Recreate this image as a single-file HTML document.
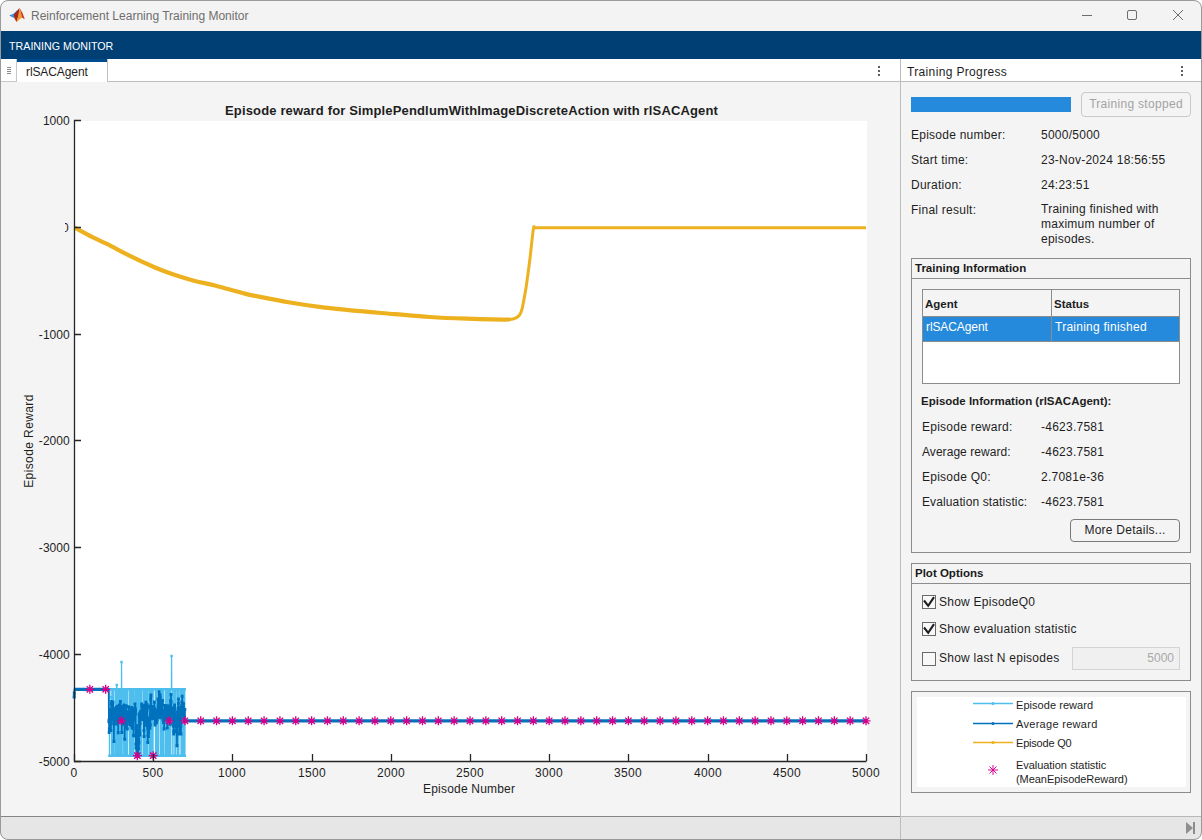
<!DOCTYPE html>
<html><head><meta charset="utf-8">
<style>
*{box-sizing:border-box}
html,body{margin:0;padding:0;width:1202px;height:840px;overflow:hidden;background:#ffffff;font-family:"Liberation Sans",sans-serif;font-size:12px;color:#1a1a1a}
.a{position:absolute}
#win{position:absolute;left:0;top:0;width:1202px;height:840px;border-radius:8px;background:#f3f3f3;overflow:hidden}
#frame{position:absolute;left:0;top:0;width:1202px;height:840px;border:1px solid #9a9a9a;border-radius:8px;pointer-events:none}
#title{position:absolute;left:31px;top:9px;font-size:12px;color:#6e6e6e;white-space:nowrap}
#bluebar{position:absolute;left:0;top:31px;width:1202px;height:28px;background:#003f73}
#bluebar span{position:absolute;left:9px;top:9px;color:#fff;font-size:10.7px}
#tabs{position:absolute;left:0;top:59px;width:900px;height:23px;background:#fff;border-bottom:1px solid #bdbdbd}
#rtabs{position:absolute;left:901px;top:59px;width:301px;height:23px;background:#fff;border-bottom:1px solid #bdbdbd}
.pane{position:absolute;background:#f4f4f4}
.vdiv{position:absolute;left:900px;top:59px;width:1px;height:780px;background:#bdbdbd}
.grp{position:absolute;border:1px solid #8c8c8c}
.grp .hd{position:absolute;left:0;top:0;right:0;height:20px;border-bottom:1px solid #8c8c8c;font-weight:bold;padding-left:3px;line-height:18px;font-size:11.5px;letter-spacing:0}
.lbl{position:absolute;white-space:nowrap;font-size:12px;color:#1e1e1e;letter-spacing:0.25px}
.yt{position:absolute;left:0;width:69.8px;text-align:right;font-size:12px;color:#1e1e1e;letter-spacing:0.05px}
.xt{position:absolute;top:766px;width:60px;text-align:center;font-size:12px;color:#1e1e1e;letter-spacing:0.3px}
.cb{position:absolute;width:14px;height:14px;border:1px solid #6a6a6a;background:#f8f8f8}
</style></head><body>
<div id="win">
  <!-- title bar -->
  <svg class="a" style="left:8px;top:6px" width="18" height="18" viewBox="0 0 18 18">
    <path d="M1.1,9.6 L5.5,7.8 L9.5,4 L11.2,2.2 L8.5,8.5 L6.8,12.3 L4,11 Z" fill="#3a8fd9"/>
    <path d="M5.8,8.6 L9.8,4.2 L11.6,1.9 L10.6,9.5 L8.5,16.1 L6.6,12.6 Z" fill="#a8261a"/>
    <path d="M11.6,1.9 L12.8,6 L13.8,11.6 L8.5,16.1 L10.2,10 Z" fill="#ef9a2a"/>
    <path d="M11.6,1.9 L14.3,6.5 L16.8,13.3 L13.8,11.6 L12.8,6 Z" fill="#c8381e"/>
    <path d="M8.5,16.1 L11.5,13.8 L9.6,15.5Z" fill="#f5c02e"/>
  </svg>
  <div id="title">Reinforcement Learning Training Monitor</div>
  <svg class="a" style="left:1070px;top:0" width="130" height="30">
    <path d="M12,15.5H22" stroke="#6c6c6c" stroke-width="1"/>
    <rect x="57.5" y="10.5" width="9" height="9" rx="1.5" fill="none" stroke="#6c6c6c" stroke-width="1"/>
    <path d="M103,10L113,20M113,10L103,20" stroke="#6c6c6c" stroke-width="1"/>
  </svg>
  <div id="bluebar"><span>TRAINING MONITOR</span></div>

  <!-- tab strip -->
  <div id="tabs"></div>
  <div class="a" style="left:0;top:59px;width:17px;height:23px;background:#fff;border-right:1px solid #c8c8c8;border-bottom:1px solid #c8c8c8"></div>
  <svg class="a" style="left:0;top:59px" width="16" height="22"><path d="M7,8.5H11M7,10.5H11M7,12.5H11M7,14.5H11" stroke="#8a8a8a" stroke-width="1"/></svg>
  <div class="a" style="left:17px;top:59px;width:90px;height:23px;background:#fff;border-top:3px solid #004b8d"></div>
  <div class="a" style="left:107px;top:59px;width:1px;height:23px;background:#c0c0c0"></div>
  <div class="lbl" style="left:26px;top:65px;letter-spacing:-0.1px">rlSACAgent</div>
  <svg class="a" style="left:877px;top:65px" width="5" height="12"><rect x="1" y="1" width="2" height="2" fill="#5e5e5e"/><rect x="1" y="5" width="2" height="2" fill="#5e5e5e"/><rect x="1" y="9" width="2" height="2" fill="#5e5e5e"/></svg>

  <div id="rtabs"></div>
  <div class="lbl" style="left:907px;top:65px;letter-spacing:0.35px">Training Progress</div>
  <svg class="a" style="left:1180px;top:65px" width="5" height="12"><rect x="1" y="1" width="2" height="2" fill="#5e5e5e"/><rect x="1" y="5" width="2" height="2" fill="#5e5e5e"/><rect x="1" y="9" width="2" height="2" fill="#5e5e5e"/></svg>

  <!-- left pane -->
  <div class="pane" style="left:0;top:82px;width:900px;height:734px"></div>
  <div class="a" style="left:0;top:816px;width:900px;height:1px;background:#858585"></div>
  <div class="a" style="left:901px;top:816px;width:301px;height:1px;background:#b8b8b8"></div>
  <div class="a" style="left:0;top:817px;width:1202px;height:23px;background:#e6e6e6"></div>
  <svg class="a" style="left:0;top:0" width="1202" height="840">
<rect x="75" y="121" width="792" height="640" fill="#fff"/>
<polyline points="74.16,696.9 74.32,694.8 74.48,689.3 74.63,689.3 74.79,689.3 74.95,689.3 75.11,689.3 75.27,689.3 75.43,689.3 75.58,689.3 75.74,689.3 75.90,689.3 76.06,689.3 76.22,689.3 76.38,689.3 76.53,689.3 76.69,689.3 76.85,689.3 77.01,689.3 77.17,689.3 77.33,689.3 77.48,689.3 77.64,689.3 77.80,689.3 77.96,689.3 78.12,689.3 78.28,689.3 78.44,689.3 78.59,689.3 78.75,689.3 78.91,689.3 79.07,689.3 79.23,689.3 79.39,689.3 79.54,689.3 79.70,689.3 79.86,689.3 80.02,689.3 80.18,689.3 80.34,689.3 80.49,689.3 80.65,689.3 80.81,689.3 80.97,689.3 81.13,689.3 81.29,689.3 81.44,689.3 81.60,689.3 81.76,689.3 81.92,689.3 82.08,689.3 82.24,689.3 82.40,689.3 82.55,689.3 82.71,689.3 82.87,689.3 83.03,689.3 83.19,689.3 83.35,689.3 83.50,689.3 83.66,689.3 83.82,689.3 83.98,689.3 84.14,689.3 84.30,689.3 84.45,689.3 84.61,689.3 84.77,689.3 84.93,689.3 85.09,689.3 85.25,689.3 85.40,689.3 85.56,689.3 85.72,689.3 85.88,689.3 86.04,689.3 86.20,689.3 86.36,689.3 86.51,689.3 86.67,689.3 86.83,689.3 86.99,689.3 87.15,689.3 87.31,689.3 87.46,689.3 87.62,689.3 87.78,689.3 87.94,689.3 88.10,689.3 88.26,689.3 88.41,689.3 88.57,689.3 88.73,689.3 88.89,689.3 89.05,689.3 89.21,689.3 89.36,689.3 89.52,689.3 89.68,689.3 89.84,689.3 90.00,689.3 90.16,689.3 90.32,689.3 90.47,689.3 90.63,689.3 90.79,689.3 90.95,689.3 91.11,689.3 91.27,689.3 91.42,689.3 91.58,689.3 91.74,689.3 91.90,689.3 92.06,689.3 92.22,689.3 92.37,689.3 92.53,689.3 92.69,689.3 92.85,689.3 93.01,689.3 93.17,689.3 93.32,689.3 93.48,689.3 93.64,689.3 93.80,689.3 93.96,689.3 94.12,689.3 94.28,689.3 94.43,689.3 94.59,689.3 94.75,689.3 94.91,689.3 95.07,689.3 95.23,689.3 95.38,689.3 95.54,689.3 95.70,689.3 95.86,689.3 96.02,689.3 96.18,689.3 96.33,689.3 96.49,689.3 96.65,689.3 96.81,689.3 96.97,689.3 97.13,689.3 97.28,689.3 97.44,689.3 97.60,689.3 97.76,689.3 97.92,689.3 98.08,689.3 98.24,689.3 98.39,689.3 98.55,689.3 98.71,689.3 98.87,689.3 99.03,689.3 99.19,689.3 99.34,689.3 99.50,689.3 99.66,689.3 99.82,689.3 99.98,689.3 100.14,689.3 100.29,689.3 100.45,689.3 100.61,689.3 100.77,689.3 100.93,689.3 101.09,689.3 101.24,689.3 101.40,689.3 101.56,689.3 101.72,689.3 101.88,689.3 102.04,689.3 102.20,689.3 102.35,689.3 102.51,689.3 102.67,689.3 102.83,689.3 102.99,689.3 103.15,689.3 103.30,689.3 103.46,689.3 103.62,689.3 103.78,689.3 103.94,689.3 104.10,689.3 104.25,689.3 104.41,689.3 104.57,689.3 104.73,689.3 104.89,689.3 105.05,689.3 105.20,689.3 105.36,689.3 105.52,689.3 105.68,689.3 105.84,689.3 106.00,689.3 106.16,689.3 106.31,689.3 106.47,689.3 106.63,689.3 106.79,689.3 106.95,689.3 107.11,689.3 107.26,689.3 107.42,689.3 107.58,689.3 107.74,689.3 107.90,689.3 108.06,689.3 108.21,689.3 108.37,689.3 108.53,689.3 108.69,689.3 108.85,689.3 109.01,689.3 109.16,689.3 109.32,689.3 109.48,755.7 109.64,755.7 109.80,689.3 109.96,697.3 110.12,697.3 110.27,697.3 110.43,697.3 110.59,697.3 110.75,697.3 110.91,697.3 111.07,697.3 111.22,697.3 111.38,697.3 111.54,697.3 111.70,755.7 111.86,689.3 112.02,689.3 112.17,689.3 112.33,689.3 112.49,718.3 112.65,689.3 112.81,689.3 112.97,755.7 113.12,755.7 113.28,689.3 113.44,728.5 113.60,689.3 113.76,755.7 113.92,755.7 114.08,755.7 114.23,755.7 114.39,755.7 114.55,755.7 114.71,755.7 114.87,755.7 115.03,755.7 115.18,755.7 115.34,689.3 115.50,689.3 115.66,689.3 115.82,755.7 115.98,755.7 116.13,755.7 116.29,755.7 116.45,755.7 116.61,689.3 116.77,685.0 116.93,689.3 117.08,689.3 117.24,689.3 117.40,689.3 117.56,755.7 117.72,755.7 117.88,691.8 118.04,755.7 118.19,689.3 118.35,755.7 118.51,689.3 118.67,689.3 118.83,689.3 118.99,689.3 119.14,689.3 119.30,755.7 119.46,755.7 119.62,695.3 119.78,713.5 119.94,755.7 120.09,689.3 120.25,755.7 120.41,755.7 120.57,755.7 120.73,689.3 120.89,689.3 121.04,689.3 121.20,755.7 121.36,755.7 121.52,662.0 121.68,689.3 121.84,689.3 122.00,755.7 122.15,755.7 122.31,689.3 122.47,689.3 122.63,689.3 122.79,689.3 122.95,689.3 123.10,689.3 123.26,689.3 123.42,689.3 123.58,689.3 123.74,755.7 123.90,689.3 124.05,689.3 124.21,755.7 124.37,689.3 124.53,689.3 124.69,689.3 124.85,755.7 125.00,755.7 125.16,689.3 125.32,755.7 125.48,755.7 125.64,755.7 125.80,755.7 125.96,689.3 126.11,689.3 126.27,755.7 126.43,689.3 126.59,689.3 126.75,689.3 126.91,740.6 127.06,689.3 127.22,755.7 127.38,755.7 127.54,755.7 127.70,689.3 127.86,689.3 128.01,689.3 128.17,689.3 128.33,689.3 128.49,689.3 128.65,689.3 128.81,689.3 128.96,689.3 129.12,689.3 129.28,689.3 129.44,689.3 129.60,755.7 129.76,689.3 129.92,755.7 130.07,755.7 130.23,689.3 130.39,755.7 130.55,689.3 130.71,755.7 130.87,755.7 131.02,689.3 131.18,689.3 131.34,755.7 131.50,755.7 131.66,689.3 131.82,689.3 131.97,689.3 132.13,689.3 132.29,755.7 132.45,755.7 132.61,689.3 132.77,691.3 132.92,689.3 133.08,689.3 133.24,689.3 133.40,755.7 133.56,689.3 133.72,755.7 133.88,689.3 134.03,689.3 134.19,736.8 134.35,736.8 134.51,736.8 134.67,736.8 134.83,736.8 134.98,736.8 135.14,736.8 135.30,736.8 135.46,689.3 135.62,689.3 135.78,755.7 135.93,689.3 136.09,689.3 136.25,689.3 136.41,689.3 136.57,755.7 136.73,689.3 136.88,689.3 137.04,689.3 137.20,689.3 137.36,755.7 137.52,689.3 137.68,689.3 137.84,755.7 137.99,755.7 138.15,755.7 138.31,689.3 138.47,755.7 138.63,689.3 138.79,689.3 138.94,689.3 139.10,689.3 139.26,689.3 139.42,742.4 139.58,689.3 139.74,689.3 139.89,689.3 140.05,755.7 140.21,689.3 140.37,689.3 140.53,689.3 140.69,755.7 140.84,689.3 141.00,689.3 141.16,755.7 141.32,755.7 141.48,689.3 141.64,689.3 141.80,689.3 141.95,689.3 142.11,689.3 142.27,689.3 142.43,689.3 142.59,689.3 142.75,689.3 142.90,689.3 143.06,689.3 143.22,755.7 143.38,755.7 143.54,755.7 143.70,689.3 143.85,689.3 144.01,689.3 144.17,755.7 144.33,755.7 144.49,689.3 144.65,689.3 144.80,755.7 144.96,689.3 145.12,749.1 145.28,755.7 145.44,689.3 145.60,689.3 145.76,689.3 145.91,689.3 146.07,755.7 146.23,755.7 146.39,689.3 146.55,689.3 146.71,755.7 146.86,755.7 147.02,689.3 147.18,689.3 147.34,755.7 147.50,689.3 147.66,689.3 147.81,689.3 147.97,689.3 148.13,689.3 148.29,689.3 148.45,689.3 148.61,689.3 148.76,689.3 148.92,689.3 149.08,755.7 149.24,689.3 149.40,689.3 149.56,689.3 149.72,755.7 149.87,689.3 150.03,689.3 150.19,689.3 150.35,755.7 150.51,689.3 150.67,689.3 150.82,755.7 150.98,689.3 151.14,689.3 151.30,755.7 151.46,689.3 151.62,689.3 151.77,755.7 151.93,689.3 152.09,689.3 152.25,755.7 152.41,689.3 152.57,689.3 152.72,755.7 152.88,689.3 153.04,755.7 153.20,689.3 153.36,689.3 153.52,689.3 153.68,689.3 153.83,689.3 153.99,689.3 154.15,689.3 154.31,689.3 154.47,689.3 154.63,689.3 154.78,689.3 154.94,689.3 155.10,689.3 155.26,689.3 155.42,712.3 155.58,755.7 155.73,689.3 155.89,689.3 156.05,689.3 156.21,755.7 156.37,689.3 156.53,730.6 156.68,689.3 156.84,755.7 157.00,755.7 157.16,755.7 157.32,755.7 157.48,755.7 157.64,755.7 157.79,755.7 157.95,755.7 158.11,755.7 158.27,689.3 158.43,755.7 158.59,689.3 158.74,755.7 158.90,689.3 159.06,689.3 159.22,689.3 159.38,689.3 159.54,689.3 159.69,689.3 159.85,689.3 160.01,689.3 160.17,689.3 160.33,689.3 160.49,689.3 160.64,755.7 160.80,689.3 160.96,755.7 161.12,689.3 161.28,755.7 161.44,689.3 161.60,689.3 161.75,755.7 161.91,689.3 162.07,689.3 162.23,755.7 162.39,755.7 162.55,689.3 162.70,755.7 162.86,689.3 163.02,755.7 163.18,689.3 163.34,689.3 163.50,689.3 163.65,689.3 163.81,689.3 163.97,755.7 164.13,755.7 164.29,755.7 164.45,755.7 164.60,755.7 164.76,755.7 164.92,755.7 165.08,755.7 165.24,755.7 165.40,755.7 165.56,755.7 165.71,689.3 165.87,755.7 166.03,689.3 166.19,755.7 166.35,689.3 166.51,689.3 166.66,689.3 166.82,689.3 166.98,755.7 167.14,689.3 167.30,689.3 167.46,689.3 167.61,755.7 167.77,755.7 167.93,689.3 168.09,755.7 168.25,689.3 168.41,689.3 168.56,689.3 168.72,689.3 168.88,689.3 169.04,755.7 169.20,689.3 169.36,689.3 169.52,755.7 169.67,755.7 169.83,755.7 169.99,689.3 170.15,689.3 170.31,755.7 170.47,689.3 170.62,689.3 170.78,755.7 170.94,689.3 171.10,689.3 171.26,689.3 171.42,689.3 171.57,656.0 171.73,689.3 171.89,689.3 172.05,689.3 172.21,689.3 172.37,689.3 172.52,689.3 172.68,689.3 172.84,755.7 173.00,755.7 173.16,689.3 173.32,720.6 173.48,720.6 173.63,720.6 173.79,720.6 173.95,720.6 174.11,720.6 174.27,720.6 174.43,720.6 174.58,689.3 174.74,689.3 174.90,755.7 175.06,689.3 175.22,689.3 175.38,689.3 175.53,755.7 175.69,755.7 175.85,689.3 176.01,689.3 176.17,689.3 176.33,689.3 176.48,689.3 176.64,689.3 176.80,689.3 176.96,689.3 177.12,689.3 177.28,689.3 177.44,755.7 177.59,755.7 177.75,755.7 177.91,755.7 178.07,755.7 178.23,755.7 178.39,689.3 178.54,755.7 178.70,689.3 178.86,755.7 179.02,689.3 179.18,689.3 179.34,689.3 179.49,689.3 179.65,689.3 179.81,689.3 179.97,689.3 180.13,689.3 180.29,689.3 180.44,689.3 180.60,696.0 180.76,689.3 180.92,689.3 181.08,755.7 181.24,755.7 181.40,689.3 181.55,689.3 181.71,755.7 181.87,755.7 182.03,755.7 182.19,755.7 182.35,689.3 182.50,755.7 182.66,689.3 182.82,689.3 182.98,689.3 183.14,755.7 183.30,755.7 183.45,689.3 183.61,689.3 183.77,689.3 183.93,689.3 184.09,689.3 184.25,755.7 184.40,689.3 184.56,755.7 184.72,689.3 184.88,755.7 185.04,720.8 185.20,720.8 185.36,720.8 185.51,720.8 185.67,720.8" fill="none" stroke="#4DBEEE" stroke-width="1.3"/>
<path d="M107.65,689.3h2.40M107.81,689.3h2.40M107.96,689.3h2.40M108.12,689.3h2.40M108.28,755.7h2.40M108.44,755.7h2.40M108.60,689.3h2.40M108.76,697.3h2.40M108.92,697.3h2.40M109.07,697.3h2.40M109.23,697.3h2.40M109.39,697.3h2.40M109.55,697.3h2.40M109.71,697.3h2.40M109.87,697.3h2.40M110.02,697.3h2.40M110.18,697.3h2.40M110.34,697.3h2.40M110.50,755.7h2.40M110.66,689.3h2.40M110.82,689.3h2.40M110.97,689.3h2.40M111.13,689.3h2.40M111.29,718.3h2.40M111.45,689.3h2.40M111.61,689.3h2.40M111.77,755.7h2.40M111.92,755.7h2.40M112.08,689.3h2.40M112.24,728.5h2.40M112.40,689.3h2.40M112.56,755.7h2.40M112.72,755.7h2.40M112.88,755.7h2.40M113.03,755.7h2.40M113.19,755.7h2.40M113.35,755.7h2.40M113.51,755.7h2.40M113.67,755.7h2.40M113.83,755.7h2.40M113.98,755.7h2.40M114.14,689.3h2.40M114.30,689.3h2.40M114.46,689.3h2.40M114.62,755.7h2.40M114.78,755.7h2.40M114.93,755.7h2.40M115.09,755.7h2.40M115.25,755.7h2.40M115.41,689.3h2.40M115.57,685.0h2.40M115.73,689.3h2.40M115.88,689.3h2.40M116.04,689.3h2.40M116.20,689.3h2.40M116.36,755.7h2.40M116.52,755.7h2.40M116.68,691.8h2.40M116.84,755.7h2.40M116.99,689.3h2.40M117.15,755.7h2.40M117.31,689.3h2.40M117.47,689.3h2.40M117.63,689.3h2.40M117.79,689.3h2.40M117.94,689.3h2.40M118.10,755.7h2.40M118.26,755.7h2.40M118.42,695.3h2.40M118.58,713.5h2.40M118.74,755.7h2.40M118.89,689.3h2.40M119.05,755.7h2.40M119.21,755.7h2.40M119.37,755.7h2.40M119.53,689.3h2.40M119.69,689.3h2.40M119.84,689.3h2.40M120.00,755.7h2.40M120.16,755.7h2.40M120.32,662.0h2.40M120.48,689.3h2.40M120.64,689.3h2.40M120.80,755.7h2.40M120.95,755.7h2.40M121.11,689.3h2.40M121.27,689.3h2.40M121.43,689.3h2.40M121.59,689.3h2.40M121.75,689.3h2.40M121.90,689.3h2.40M122.06,689.3h2.40M122.22,689.3h2.40M122.38,689.3h2.40M122.54,755.7h2.40M122.70,689.3h2.40M122.85,689.3h2.40M123.01,755.7h2.40M123.17,689.3h2.40M123.33,689.3h2.40M123.49,689.3h2.40M123.65,755.7h2.40M123.80,755.7h2.40M123.96,689.3h2.40M124.12,755.7h2.40M124.28,755.7h2.40M124.44,755.7h2.40M124.60,755.7h2.40M124.76,689.3h2.40M124.91,689.3h2.40M125.07,755.7h2.40M125.23,689.3h2.40M125.39,689.3h2.40M125.55,689.3h2.40M125.71,740.6h2.40M125.86,689.3h2.40M126.02,755.7h2.40M126.18,755.7h2.40M126.34,755.7h2.40M126.50,689.3h2.40M126.66,689.3h2.40M126.81,689.3h2.40M126.97,689.3h2.40M127.13,689.3h2.40M127.29,689.3h2.40M127.45,689.3h2.40M127.61,689.3h2.40M127.76,689.3h2.40M127.92,689.3h2.40M128.08,689.3h2.40M128.24,689.3h2.40M128.40,755.7h2.40M128.56,689.3h2.40M128.72,755.7h2.40M128.87,755.7h2.40M129.03,689.3h2.40M129.19,755.7h2.40M129.35,689.3h2.40M129.51,755.7h2.40M129.67,755.7h2.40M129.82,689.3h2.40M129.98,689.3h2.40M130.14,755.7h2.40M130.30,755.7h2.40M130.46,689.3h2.40M130.62,689.3h2.40M130.77,689.3h2.40M130.93,689.3h2.40M131.09,755.7h2.40M131.25,755.7h2.40M131.41,689.3h2.40M131.57,691.3h2.40M131.72,689.3h2.40M131.88,689.3h2.40M132.04,689.3h2.40M132.20,755.7h2.40M132.36,689.3h2.40M132.52,755.7h2.40M132.68,689.3h2.40M132.83,689.3h2.40M132.99,736.8h2.40M133.15,736.8h2.40M133.31,736.8h2.40M133.47,736.8h2.40M133.63,736.8h2.40M133.78,736.8h2.40M133.94,736.8h2.40M134.10,736.8h2.40M134.26,689.3h2.40M134.42,689.3h2.40M134.58,755.7h2.40M134.73,689.3h2.40M134.89,689.3h2.40M135.05,689.3h2.40M135.21,689.3h2.40M135.37,755.7h2.40M135.53,689.3h2.40M135.68,689.3h2.40M135.84,689.3h2.40M136.00,689.3h2.40M136.16,755.7h2.40M136.32,689.3h2.40M136.48,689.3h2.40M136.64,755.7h2.40M136.79,755.7h2.40M136.95,755.7h2.40M137.11,689.3h2.40M137.27,755.7h2.40M137.43,689.3h2.40M137.59,689.3h2.40M137.74,689.3h2.40M137.90,689.3h2.40M138.06,689.3h2.40M138.22,742.4h2.40M138.38,689.3h2.40M138.54,689.3h2.40M138.69,689.3h2.40M138.85,755.7h2.40M139.01,689.3h2.40M139.17,689.3h2.40M139.33,689.3h2.40M139.49,755.7h2.40M139.64,689.3h2.40M139.80,689.3h2.40M139.96,755.7h2.40M140.12,755.7h2.40M140.28,689.3h2.40M140.44,689.3h2.40M140.60,689.3h2.40M140.75,689.3h2.40M140.91,689.3h2.40M141.07,689.3h2.40M141.23,689.3h2.40M141.39,689.3h2.40M141.55,689.3h2.40M141.70,689.3h2.40M141.86,689.3h2.40M142.02,755.7h2.40M142.18,755.7h2.40M142.34,755.7h2.40M142.50,689.3h2.40M142.65,689.3h2.40M142.81,689.3h2.40M142.97,755.7h2.40M143.13,755.7h2.40M143.29,689.3h2.40M143.45,689.3h2.40M143.60,755.7h2.40M143.76,689.3h2.40M143.92,749.1h2.40M144.08,755.7h2.40M144.24,689.3h2.40M144.40,689.3h2.40M144.56,689.3h2.40M144.71,689.3h2.40M144.87,755.7h2.40M145.03,755.7h2.40M145.19,689.3h2.40M145.35,689.3h2.40M145.51,755.7h2.40M145.66,755.7h2.40M145.82,689.3h2.40M145.98,689.3h2.40M146.14,755.7h2.40M146.30,689.3h2.40M146.46,689.3h2.40M146.61,689.3h2.40M146.77,689.3h2.40M146.93,689.3h2.40M147.09,689.3h2.40M147.25,689.3h2.40M147.41,689.3h2.40M147.56,689.3h2.40M147.72,689.3h2.40M147.88,755.7h2.40M148.04,689.3h2.40M148.20,689.3h2.40M148.36,689.3h2.40M148.52,755.7h2.40M148.67,689.3h2.40M148.83,689.3h2.40M148.99,689.3h2.40M149.15,755.7h2.40M149.31,689.3h2.40M149.47,689.3h2.40M149.62,755.7h2.40M149.78,689.3h2.40M149.94,689.3h2.40M150.10,755.7h2.40M150.26,689.3h2.40M150.42,689.3h2.40M150.57,755.7h2.40M150.73,689.3h2.40M150.89,689.3h2.40M151.05,755.7h2.40M151.21,689.3h2.40M151.37,689.3h2.40M151.52,755.7h2.40M151.68,689.3h2.40M151.84,755.7h2.40M152.00,689.3h2.40M152.16,689.3h2.40M152.32,689.3h2.40M152.48,689.3h2.40M152.63,689.3h2.40M152.79,689.3h2.40M152.95,689.3h2.40M153.11,689.3h2.40M153.27,689.3h2.40M153.43,689.3h2.40M153.58,689.3h2.40M153.74,689.3h2.40M153.90,689.3h2.40M154.06,689.3h2.40M154.22,712.3h2.40M154.38,755.7h2.40M154.53,689.3h2.40M154.69,689.3h2.40M154.85,689.3h2.40M155.01,755.7h2.40M155.17,689.3h2.40M155.33,730.6h2.40M155.48,689.3h2.40M155.64,755.7h2.40M155.80,755.7h2.40M155.96,755.7h2.40M156.12,755.7h2.40M156.28,755.7h2.40M156.44,755.7h2.40M156.59,755.7h2.40M156.75,755.7h2.40M156.91,755.7h2.40M157.07,689.3h2.40M157.23,755.7h2.40M157.39,689.3h2.40M157.54,755.7h2.40M157.70,689.3h2.40M157.86,689.3h2.40M158.02,689.3h2.40M158.18,689.3h2.40M158.34,689.3h2.40M158.49,689.3h2.40M158.65,689.3h2.40M158.81,689.3h2.40M158.97,689.3h2.40M159.13,689.3h2.40M159.29,689.3h2.40M159.44,755.7h2.40M159.60,689.3h2.40M159.76,755.7h2.40M159.92,689.3h2.40M160.08,755.7h2.40M160.24,689.3h2.40M160.40,689.3h2.40M160.55,755.7h2.40M160.71,689.3h2.40M160.87,689.3h2.40M161.03,755.7h2.40M161.19,755.7h2.40M161.35,689.3h2.40M161.50,755.7h2.40M161.66,689.3h2.40M161.82,755.7h2.40M161.98,689.3h2.40M162.14,689.3h2.40M162.30,689.3h2.40M162.45,689.3h2.40M162.61,689.3h2.40M162.77,755.7h2.40M162.93,755.7h2.40M163.09,755.7h2.40M163.25,755.7h2.40M163.40,755.7h2.40M163.56,755.7h2.40M163.72,755.7h2.40M163.88,755.7h2.40M164.04,755.7h2.40M164.20,755.7h2.40M164.36,755.7h2.40M164.51,689.3h2.40M164.67,755.7h2.40M164.83,689.3h2.40M164.99,755.7h2.40M165.15,689.3h2.40M165.31,689.3h2.40M165.46,689.3h2.40M165.62,689.3h2.40M165.78,755.7h2.40M165.94,689.3h2.40M166.10,689.3h2.40M166.26,689.3h2.40M166.41,755.7h2.40M166.57,755.7h2.40M166.73,689.3h2.40M166.89,755.7h2.40M167.05,689.3h2.40M167.21,689.3h2.40M167.36,689.3h2.40M167.52,689.3h2.40M167.68,689.3h2.40M167.84,755.7h2.40M168.00,689.3h2.40M168.16,689.3h2.40M168.32,755.7h2.40M168.47,755.7h2.40M168.63,755.7h2.40M168.79,689.3h2.40M168.95,689.3h2.40M169.11,755.7h2.40M169.27,689.3h2.40M169.42,689.3h2.40M169.58,755.7h2.40M169.74,689.3h2.40M169.90,689.3h2.40M170.06,689.3h2.40M170.22,689.3h2.40M170.37,656.0h2.40M170.53,689.3h2.40M170.69,689.3h2.40M170.85,689.3h2.40M171.01,689.3h2.40M171.17,689.3h2.40M171.32,689.3h2.40M171.48,689.3h2.40M171.64,755.7h2.40M171.80,755.7h2.40M171.96,689.3h2.40M172.12,720.6h2.40M172.28,720.6h2.40M172.43,720.6h2.40M172.59,720.6h2.40M172.75,720.6h2.40M172.91,720.6h2.40M173.07,720.6h2.40M173.23,720.6h2.40M173.38,689.3h2.40M173.54,689.3h2.40M173.70,755.7h2.40M173.86,689.3h2.40M174.02,689.3h2.40M174.18,689.3h2.40M174.33,755.7h2.40M174.49,755.7h2.40M174.65,689.3h2.40M174.81,689.3h2.40M174.97,689.3h2.40M175.13,689.3h2.40M175.28,689.3h2.40M175.44,689.3h2.40M175.60,689.3h2.40M175.76,689.3h2.40M175.92,689.3h2.40M176.08,689.3h2.40M176.24,755.7h2.40M176.39,755.7h2.40M176.55,755.7h2.40M176.71,755.7h2.40M176.87,755.7h2.40M177.03,755.7h2.40M177.19,689.3h2.40M177.34,755.7h2.40M177.50,689.3h2.40M177.66,755.7h2.40M177.82,689.3h2.40M177.98,689.3h2.40M178.14,689.3h2.40M178.29,689.3h2.40M178.45,689.3h2.40M178.61,689.3h2.40M178.77,689.3h2.40M178.93,689.3h2.40M179.09,689.3h2.40M179.24,689.3h2.40M179.40,696.0h2.40M179.56,689.3h2.40M179.72,689.3h2.40M179.88,755.7h2.40M180.04,755.7h2.40M180.20,689.3h2.40M180.35,689.3h2.40M180.51,755.7h2.40M180.67,755.7h2.40M180.83,755.7h2.40M180.99,755.7h2.40M181.15,689.3h2.40M181.30,755.7h2.40M181.46,689.3h2.40M181.62,689.3h2.40M181.78,689.3h2.40M181.94,755.7h2.40M182.10,755.7h2.40M182.25,689.3h2.40M182.41,689.3h2.40M182.57,689.3h2.40M182.73,689.3h2.40M182.89,689.3h2.40M183.05,755.7h2.40M183.20,689.3h2.40M183.36,755.7h2.40M183.52,689.3h2.40M183.68,755.7h2.40M72.96,696.9h2.40M73.12,694.8h2.40" stroke="#4DBEEE" stroke-width="2.4"/>
<polyline points="74.16,696.9 74.32,693.2 74.48,689.3 74.63,689.3 74.79,689.3 74.95,689.3 75.11,689.3 75.27,689.3 75.43,689.3 75.58,689.3 75.74,689.3 75.90,689.3 76.06,689.3 76.22,689.3 76.38,689.3 76.53,689.3 76.69,689.3 76.85,689.3 77.01,689.3 77.17,689.3 77.33,689.3 77.48,689.3 77.64,689.3 77.80,689.3 77.96,689.3 78.12,689.3 78.28,689.3 78.44,689.3 78.59,689.3 78.75,689.3 78.91,689.3 79.07,689.3 79.23,689.3 79.39,689.3 79.54,689.3 79.70,689.3 79.86,689.3 80.02,689.3 80.18,689.3 80.34,689.3 80.49,689.3 80.65,689.3 80.81,689.3 80.97,689.3 81.13,689.3 81.29,689.3 81.44,689.3 81.60,689.3 81.76,689.3 81.92,689.3 82.08,689.3 82.24,689.3 82.40,689.3 82.55,689.3 82.71,689.3 82.87,689.3 83.03,689.3 83.19,689.3 83.35,689.3 83.50,689.3 83.66,689.3 83.82,689.3 83.98,689.3 84.14,689.3 84.30,689.3 84.45,689.3 84.61,689.3 84.77,689.3 84.93,689.3 85.09,689.3 85.25,689.3 85.40,689.3 85.56,689.3 85.72,689.3 85.88,689.3 86.04,689.3 86.20,689.3 86.36,689.3 86.51,689.3 86.67,689.3 86.83,689.3 86.99,689.3 87.15,689.3 87.31,689.3 87.46,689.3 87.62,689.3 87.78,689.3 87.94,689.3 88.10,689.3 88.26,689.3 88.41,689.3 88.57,689.3 88.73,689.3 88.89,689.3 89.05,689.3 89.21,689.3 89.36,689.3 89.52,689.3 89.68,689.3 89.84,689.3 90.00,689.3 90.16,689.3 90.32,689.3 90.47,689.3 90.63,689.3 90.79,689.3 90.95,689.3 91.11,689.3 91.27,689.3 91.42,689.3 91.58,689.3 91.74,689.3 91.90,689.3 92.06,689.3 92.22,689.3 92.37,689.3 92.53,689.3 92.69,689.3 92.85,689.3 93.01,689.3 93.17,689.3 93.32,689.3 93.48,689.3 93.64,689.3 93.80,689.3 93.96,689.3 94.12,689.3 94.28,689.3 94.43,689.3 94.59,689.3 94.75,689.3 94.91,689.3 95.07,689.3 95.23,689.3 95.38,689.3 95.54,689.3 95.70,689.3 95.86,689.3 96.02,689.3 96.18,689.3 96.33,689.3 96.49,689.3 96.65,689.3 96.81,689.3 96.97,689.3 97.13,689.3 97.28,689.3 97.44,689.3 97.60,689.3 97.76,689.3 97.92,689.3 98.08,689.3 98.24,689.3 98.39,689.3 98.55,689.3 98.71,689.3 98.87,689.3 99.03,689.3 99.19,689.3 99.34,689.3 99.50,689.3 99.66,689.3 99.82,689.3 99.98,689.3 100.14,689.3 100.29,689.3 100.45,689.3 100.61,689.3 100.77,689.3 100.93,689.3 101.09,689.3 101.24,689.3 101.40,689.3 101.56,689.3 101.72,689.3 101.88,689.3 102.04,689.3 102.20,689.3 102.35,689.3 102.51,689.3 102.67,689.3 102.83,689.3 102.99,689.3 103.15,689.3 103.30,689.3 103.46,689.3 103.62,689.3 103.78,689.3 103.94,689.3 104.10,689.3 104.25,689.3 104.41,689.3 104.57,689.3 104.73,689.3 104.89,689.3 105.05,689.3 105.20,689.3 105.36,689.3 105.52,689.3 105.68,689.3 105.84,689.3 106.00,689.3 106.16,689.3 106.31,689.3 106.47,689.3 106.63,689.3 106.79,689.3 106.95,689.3 107.11,689.3 107.26,689.3 107.42,689.3 107.58,689.3 107.74,689.3 107.90,689.3 108.06,689.3 108.21,689.3 108.37,689.3 108.53,689.3 108.69,689.3 108.85,721.3 109.01,720.0 109.16,732.4 109.32,728.9 109.48,720.6 109.64,712.0 109.80,711.3 109.96,722.3 110.12,724.0 110.27,720.9 110.43,711.4 110.59,710.6 110.75,709.3 110.91,730.5 111.07,719.5 111.22,715.5 111.38,703.9 111.54,701.6 111.70,704.4 111.86,711.5 112.02,707.6 112.17,708.3 112.33,710.9 112.49,704.3 112.65,705.3 112.81,704.2 112.97,702.3 113.12,714.9 113.28,717.4 113.44,713.5 113.60,723.6 113.76,720.2 113.92,741.4 114.08,721.1 114.23,715.5 114.39,710.7 114.55,710.5 114.71,711.0 114.87,712.5 115.03,717.2 115.18,716.1 115.34,709.2 115.50,719.3 115.66,719.8 115.82,708.3 115.98,711.8 116.13,707.5 116.29,715.4 116.45,723.8 116.61,714.1 116.77,713.1 116.93,708.3 117.08,708.2 117.24,706.7 117.40,711.3 117.56,706.4 117.72,706.3 117.88,711.7 118.04,714.6 118.19,732.7 118.35,718.6 118.51,711.6 118.67,713.1 118.83,708.1 118.99,716.3 119.14,708.2 119.30,705.0 119.46,707.2 119.62,705.6 119.78,711.8 119.94,707.2 120.09,707.4 120.25,719.7 120.41,701.6 120.57,708.5 120.73,711.1 120.89,713.5 121.04,722.2 121.20,721.6 121.36,710.6 121.52,709.0 121.68,713.7 121.84,732.4 122.00,712.3 122.15,707.3 122.31,724.1 122.47,717.7 122.63,718.7 122.79,706.3 122.95,712.0 123.10,707.6 123.26,706.4 123.42,712.7 123.58,709.8 123.74,708.0 123.90,705.1 124.05,710.1 124.21,715.1 124.37,717.8 124.53,715.3 124.69,739.2 124.85,723.8 125.00,715.6 125.16,713.0 125.32,719.0 125.48,721.0 125.64,713.8 125.80,713.2 125.96,714.3 126.11,705.8 126.27,719.2 126.43,727.3 126.59,714.2 126.75,717.8 126.91,721.9 127.06,716.5 127.22,711.8 127.38,728.9 127.54,720.9 127.70,719.2 127.86,715.6 128.01,712.2 128.17,712.9 128.33,713.1 128.49,713.1 128.65,706.8 128.81,714.4 128.96,719.6 129.12,720.8 129.28,714.3 129.44,716.3 129.60,724.4 129.76,719.9 129.92,721.3 130.07,724.4 130.23,723.6 130.39,725.0 130.55,722.8 130.71,717.3 130.87,710.2 131.02,709.1 131.18,709.6 131.34,720.5 131.50,715.8 131.66,707.6 131.82,718.4 131.97,727.5 132.13,724.1 132.29,721.3 132.45,710.1 132.61,710.8 132.77,723.0 132.92,728.4 133.08,719.9 133.24,717.4 133.40,719.3 133.56,735.6 133.72,712.9 133.88,710.4 134.03,712.2 134.19,716.8 134.35,720.4 134.51,709.9 134.67,708.6 134.83,712.5 134.98,704.0 135.14,707.8 135.30,708.6 135.46,713.9 135.62,710.5 135.78,744.1 135.93,747.9 136.09,748.0 136.25,740.1 136.41,742.2 136.57,755.7 136.73,733.4 136.88,733.3 137.04,725.9 137.20,731.9 137.36,748.0 137.52,740.8 137.68,741.6 137.84,739.6 137.99,753.8 138.15,755.7 138.31,745.4 138.47,739.9 138.63,748.8 138.79,730.7 138.94,742.6 139.10,714.1 139.26,714.8 139.42,720.5 139.58,716.8 139.74,732.9 139.89,734.8 140.05,723.5 140.21,713.3 140.37,712.6 140.53,718.9 140.69,711.4 140.84,715.8 141.00,719.6 141.16,719.2 141.32,715.5 141.48,712.9 141.64,704.2 141.80,706.1 141.95,706.2 142.11,709.4 142.27,710.6 142.43,714.9 142.59,708.3 142.75,706.5 142.90,712.4 143.06,706.9 143.22,709.7 143.38,718.7 143.54,712.5 143.70,719.3 143.85,730.5 144.01,736.5 144.17,716.3 144.33,721.8 144.49,713.8 144.65,705.4 144.80,715.5 144.96,717.8 145.12,718.0 145.28,725.1 145.44,719.5 145.60,717.0 145.76,708.5 145.91,702.4 146.07,704.4 146.23,718.5 146.39,724.8 146.55,712.3 146.71,713.4 146.86,707.9 147.02,710.3 147.18,704.9 147.34,708.2 147.50,718.1 147.66,728.0 147.81,742.3 147.97,735.3 148.13,730.1 148.29,729.7 148.45,736.4 148.61,732.5 148.76,728.5 148.92,726.1 149.08,726.9 149.24,722.9 149.40,719.5 149.56,725.2 149.72,718.8 149.87,728.2 150.03,706.3 150.19,716.9 150.35,724.8 150.51,714.5 150.67,699.1 150.82,696.2 150.98,695.1 151.14,707.4 151.30,710.5 151.46,711.3 151.62,715.4 151.77,718.6 151.93,716.1 152.09,712.9 152.25,711.4 152.41,710.3 152.57,713.9 152.72,711.1 152.88,712.6 153.04,718.6 153.20,712.5 153.36,706.6 153.52,714.3 153.68,710.9 153.83,717.1 153.99,709.0 154.15,713.2 154.31,702.1 154.47,708.7 154.63,716.1 154.78,716.0 154.94,723.4 155.10,724.8 155.26,719.4 155.42,720.3 155.58,710.0 155.73,714.0 155.89,712.5 156.05,717.8 156.21,714.3 156.37,720.4 156.53,722.6 156.68,715.5 156.84,712.3 157.00,715.6 157.16,719.9 157.32,710.2 157.48,710.3 157.64,716.5 157.79,714.8 157.95,699.2 158.11,706.7 158.27,705.1 158.43,715.3 158.59,709.2 158.74,708.2 158.90,706.6 159.06,691.9 159.22,695.1 159.38,696.4 159.54,697.7 159.69,695.5 159.85,701.4 160.01,694.8 160.17,717.7 160.33,697.1 160.49,701.3 160.64,706.1 160.80,711.3 160.96,712.9 161.12,716.4 161.28,715.9 161.44,709.6 161.60,707.5 161.75,709.5 161.91,705.0 162.07,714.9 162.23,712.6 162.39,704.3 162.55,700.5 162.70,710.5 162.86,712.6 163.02,720.1 163.18,710.9 163.34,712.9 163.50,722.4 163.65,717.3 163.81,716.0 163.97,722.5 164.13,728.9 164.29,720.6 164.45,716.7 164.60,719.2 164.76,711.9 164.92,705.6 165.08,710.8 165.24,715.7 165.40,712.4 165.56,717.1 165.71,711.9 165.87,718.4 166.03,714.6 166.19,708.0 166.35,707.3 166.51,709.0 166.66,708.1 166.82,714.2 166.98,713.8 167.14,708.2 167.30,728.0 167.46,705.8 167.61,709.8 167.77,713.7 167.93,706.5 168.09,715.8 168.25,715.3 168.41,711.4 168.56,709.9 168.72,721.5 168.88,714.3 169.04,715.4 169.20,717.3 169.36,718.9 169.52,713.1 169.67,714.8 169.83,716.2 169.99,720.9 170.15,724.2 170.31,707.9 170.47,708.0 170.62,700.6 170.78,704.4 170.94,694.7 171.10,701.9 171.26,714.7 171.42,711.1 171.57,714.8 171.73,713.6 171.89,711.3 172.05,711.0 172.21,714.8 172.37,715.5 172.52,708.2 172.68,712.2 172.84,719.0 173.00,714.0 173.16,725.8 173.32,715.7 173.48,721.4 173.63,731.1 173.79,733.8 173.95,721.5 174.11,715.6 174.27,708.6 174.43,707.7 174.58,705.1 174.74,713.7 174.90,709.1 175.06,716.4 175.22,719.2 175.38,719.1 175.53,721.7 175.69,723.5 175.85,722.9 176.01,726.9 176.17,716.8 176.33,730.8 176.48,731.7 176.64,730.7 176.80,725.5 176.96,745.7 177.12,712.1 177.28,717.8 177.44,718.5 177.59,716.3 177.75,726.2 177.91,721.9 178.07,715.9 178.23,708.4 178.39,703.5 178.54,699.0 178.70,707.7 178.86,710.7 179.02,716.5 179.18,733.9 179.34,711.4 179.49,713.5 179.65,709.6 179.81,711.7 179.97,707.9 180.13,707.5 180.29,712.0 180.44,718.4 180.60,721.8 180.76,726.6 180.92,733.9 181.08,715.3 181.24,710.5 181.40,711.1 181.55,705.8 181.71,702.0 181.87,708.1 182.03,708.5 182.19,696.3 182.35,703.0 182.50,708.3 182.66,712.8 182.82,714.5 182.98,713.1 183.14,715.0 183.30,707.5 183.45,708.2 183.61,703.9 183.77,715.1 183.93,718.5 184.09,718.0 184.25,720.8 184.40,718.9 184.56,719.9 184.72,718.1 184.88,709.7 185.04,720.8 185.20,720.8 185.36,720.8 185.51,720.8 185.67,720.8" fill="none" stroke="#0072BD" stroke-width="1.7"/>
<path d="M107.45,721.3h2.80M107.61,720.0h2.80M107.76,732.4h2.80M107.92,728.9h2.80M108.08,720.6h2.80M108.24,712.0h2.80M108.40,711.3h2.80M108.56,722.3h2.80M108.72,724.0h2.80M108.87,720.9h2.80M109.03,711.4h2.80M109.19,710.6h2.80M109.35,709.3h2.80M109.51,730.5h2.80M109.67,719.5h2.80M109.82,715.5h2.80M109.98,703.9h2.80M110.14,701.6h2.80M110.30,704.4h2.80M110.46,711.5h2.80M110.62,707.6h2.80M110.77,708.3h2.80M110.93,710.9h2.80M111.09,704.3h2.80M111.25,705.3h2.80M111.41,704.2h2.80M111.57,702.3h2.80M111.72,714.9h2.80M111.88,717.4h2.80M112.04,713.5h2.80M112.20,723.6h2.80M112.36,720.2h2.80M112.52,741.4h2.80M112.68,721.1h2.80M112.83,715.5h2.80M112.99,710.7h2.80M113.15,710.5h2.80M113.31,711.0h2.80M113.47,712.5h2.80M113.63,717.2h2.80M113.78,716.1h2.80M113.94,709.2h2.80M114.10,719.3h2.80M114.26,719.8h2.80M114.42,708.3h2.80M114.58,711.8h2.80M114.73,707.5h2.80M114.89,715.4h2.80M115.05,723.8h2.80M115.21,714.1h2.80M115.37,713.1h2.80M115.53,708.3h2.80M115.68,708.2h2.80M115.84,706.7h2.80M116.00,711.3h2.80M116.16,706.4h2.80M116.32,706.3h2.80M116.48,711.7h2.80M116.64,714.6h2.80M116.79,732.7h2.80M116.95,718.6h2.80M117.11,711.6h2.80M117.27,713.1h2.80M117.43,708.1h2.80M117.59,716.3h2.80M117.74,708.2h2.80M117.90,705.0h2.80M118.06,707.2h2.80M118.22,705.6h2.80M118.38,711.8h2.80M118.54,707.2h2.80M118.69,707.4h2.80M118.85,719.7h2.80M119.01,701.6h2.80M119.17,708.5h2.80M119.33,711.1h2.80M119.49,713.5h2.80M119.64,722.2h2.80M119.80,721.6h2.80M119.96,710.6h2.80M120.12,709.0h2.80M120.28,713.7h2.80M120.44,732.4h2.80M120.60,712.3h2.80M120.75,707.3h2.80M120.91,724.1h2.80M121.07,717.7h2.80M121.23,718.7h2.80M121.39,706.3h2.80M121.55,712.0h2.80M121.70,707.6h2.80M121.86,706.4h2.80M122.02,712.7h2.80M122.18,709.8h2.80M122.34,708.0h2.80M122.50,705.1h2.80M122.65,710.1h2.80M122.81,715.1h2.80M122.97,717.8h2.80M123.13,715.3h2.80M123.29,739.2h2.80M123.45,723.8h2.80M123.60,715.6h2.80M123.76,713.0h2.80M123.92,719.0h2.80M124.08,721.0h2.80M124.24,713.8h2.80M124.40,713.2h2.80M124.56,714.3h2.80M124.71,705.8h2.80M124.87,719.2h2.80M125.03,727.3h2.80M125.19,714.2h2.80M125.35,717.8h2.80M125.51,721.9h2.80M125.66,716.5h2.80M125.82,711.8h2.80M125.98,728.9h2.80M126.14,720.9h2.80M126.30,719.2h2.80M126.46,715.6h2.80M126.61,712.2h2.80M126.77,712.9h2.80M126.93,713.1h2.80M127.09,713.1h2.80M127.25,706.8h2.80M127.41,714.4h2.80M127.56,719.6h2.80M127.72,720.8h2.80M127.88,714.3h2.80M128.04,716.3h2.80M128.20,724.4h2.80M128.36,719.9h2.80M128.52,721.3h2.80M128.67,724.4h2.80M128.83,723.6h2.80M128.99,725.0h2.80M129.15,722.8h2.80M129.31,717.3h2.80M129.47,710.2h2.80M129.62,709.1h2.80M129.78,709.6h2.80M129.94,720.5h2.80M130.10,715.8h2.80M130.26,707.6h2.80M130.42,718.4h2.80M130.57,727.5h2.80M130.73,724.1h2.80M130.89,721.3h2.80M131.05,710.1h2.80M131.21,710.8h2.80M131.37,723.0h2.80M131.52,728.4h2.80M131.68,719.9h2.80M131.84,717.4h2.80M132.00,719.3h2.80M132.16,735.6h2.80M132.32,712.9h2.80M132.48,710.4h2.80M132.63,712.2h2.80M132.79,716.8h2.80M132.95,720.4h2.80M133.11,709.9h2.80M133.27,708.6h2.80M133.43,712.5h2.80M133.58,704.0h2.80M133.74,707.8h2.80M133.90,708.6h2.80M134.06,713.9h2.80M134.22,710.5h2.80M134.38,744.1h2.80M134.53,747.9h2.80M134.69,748.0h2.80M134.85,740.1h2.80M135.01,742.2h2.80M135.17,755.7h2.80M135.33,733.4h2.80M135.48,733.3h2.80M135.64,725.9h2.80M135.80,731.9h2.80M135.96,748.0h2.80M136.12,740.8h2.80M136.28,741.6h2.80M136.44,739.6h2.80M136.59,753.8h2.80M136.75,755.7h2.80M136.91,745.4h2.80M137.07,739.9h2.80M137.23,748.8h2.80M137.39,730.7h2.80M137.54,742.6h2.80M137.70,714.1h2.80M137.86,714.8h2.80M138.02,720.5h2.80M138.18,716.8h2.80M138.34,732.9h2.80M138.49,734.8h2.80M138.65,723.5h2.80M138.81,713.3h2.80M138.97,712.6h2.80M139.13,718.9h2.80M139.29,711.4h2.80M139.44,715.8h2.80M139.60,719.6h2.80M139.76,719.2h2.80M139.92,715.5h2.80M140.08,712.9h2.80M140.24,704.2h2.80M140.40,706.1h2.80M140.55,706.2h2.80M140.71,709.4h2.80M140.87,710.6h2.80M141.03,714.9h2.80M141.19,708.3h2.80M141.35,706.5h2.80M141.50,712.4h2.80M141.66,706.9h2.80M141.82,709.7h2.80M141.98,718.7h2.80M142.14,712.5h2.80M142.30,719.3h2.80M142.45,730.5h2.80M142.61,736.5h2.80M142.77,716.3h2.80M142.93,721.8h2.80M143.09,713.8h2.80M143.25,705.4h2.80M143.40,715.5h2.80M143.56,717.8h2.80M143.72,718.0h2.80M143.88,725.1h2.80M144.04,719.5h2.80M144.20,717.0h2.80M144.36,708.5h2.80M144.51,702.4h2.80M144.67,704.4h2.80M144.83,718.5h2.80M144.99,724.8h2.80M145.15,712.3h2.80M145.31,713.4h2.80M145.46,707.9h2.80M145.62,710.3h2.80M145.78,704.9h2.80M145.94,708.2h2.80M146.10,718.1h2.80M146.26,728.0h2.80M146.41,742.3h2.80M146.57,735.3h2.80M146.73,730.1h2.80M146.89,729.7h2.80M147.05,736.4h2.80M147.21,732.5h2.80M147.36,728.5h2.80M147.52,726.1h2.80M147.68,726.9h2.80M147.84,722.9h2.80M148.00,719.5h2.80M148.16,725.2h2.80M148.32,718.8h2.80M148.47,728.2h2.80M148.63,706.3h2.80M148.79,716.9h2.80M148.95,724.8h2.80M149.11,714.5h2.80M149.27,699.1h2.80M149.42,696.2h2.80M149.58,695.1h2.80M149.74,707.4h2.80M149.90,710.5h2.80M150.06,711.3h2.80M150.22,715.4h2.80M150.37,718.6h2.80M150.53,716.1h2.80M150.69,712.9h2.80M150.85,711.4h2.80M151.01,710.3h2.80M151.17,713.9h2.80M151.32,711.1h2.80M151.48,712.6h2.80M151.64,718.6h2.80M151.80,712.5h2.80M151.96,706.6h2.80M152.12,714.3h2.80M152.28,710.9h2.80M152.43,717.1h2.80M152.59,709.0h2.80M152.75,713.2h2.80M152.91,702.1h2.80M153.07,708.7h2.80M153.23,716.1h2.80M153.38,716.0h2.80M153.54,723.4h2.80M153.70,724.8h2.80M153.86,719.4h2.80M154.02,720.3h2.80M154.18,710.0h2.80M154.33,714.0h2.80M154.49,712.5h2.80M154.65,717.8h2.80M154.81,714.3h2.80M154.97,720.4h2.80M155.13,722.6h2.80M155.28,715.5h2.80M155.44,712.3h2.80M155.60,715.6h2.80M155.76,719.9h2.80M155.92,710.2h2.80M156.08,710.3h2.80M156.24,716.5h2.80M156.39,714.8h2.80M156.55,699.2h2.80M156.71,706.7h2.80M156.87,705.1h2.80M157.03,715.3h2.80M157.19,709.2h2.80M157.34,708.2h2.80M157.50,706.6h2.80M157.66,691.9h2.80M157.82,695.1h2.80M157.98,696.4h2.80M158.14,697.7h2.80M158.29,695.5h2.80M158.45,701.4h2.80M158.61,694.8h2.80M158.77,717.7h2.80M158.93,697.1h2.80M159.09,701.3h2.80M159.24,706.1h2.80M159.40,711.3h2.80M159.56,712.9h2.80M159.72,716.4h2.80M159.88,715.9h2.80M160.04,709.6h2.80M160.20,707.5h2.80M160.35,709.5h2.80M160.51,705.0h2.80M160.67,714.9h2.80M160.83,712.6h2.80M160.99,704.3h2.80M161.15,700.5h2.80M161.30,710.5h2.80M161.46,712.6h2.80M161.62,720.1h2.80M161.78,710.9h2.80M161.94,712.9h2.80M162.10,722.4h2.80M162.25,717.3h2.80M162.41,716.0h2.80M162.57,722.5h2.80M162.73,728.9h2.80M162.89,720.6h2.80M163.05,716.7h2.80M163.20,719.2h2.80M163.36,711.9h2.80M163.52,705.6h2.80M163.68,710.8h2.80M163.84,715.7h2.80M164.00,712.4h2.80M164.16,717.1h2.80M164.31,711.9h2.80M164.47,718.4h2.80M164.63,714.6h2.80M164.79,708.0h2.80M164.95,707.3h2.80M165.11,709.0h2.80M165.26,708.1h2.80M165.42,714.2h2.80M165.58,713.8h2.80M165.74,708.2h2.80M165.90,728.0h2.80M166.06,705.8h2.80M166.21,709.8h2.80M166.37,713.7h2.80M166.53,706.5h2.80M166.69,715.8h2.80M166.85,715.3h2.80M167.01,711.4h2.80M167.16,709.9h2.80M167.32,721.5h2.80M167.48,714.3h2.80M167.64,715.4h2.80M167.80,717.3h2.80M167.96,718.9h2.80M168.12,713.1h2.80M168.27,714.8h2.80M168.43,716.2h2.80M168.59,720.9h2.80M168.75,724.2h2.80M168.91,707.9h2.80M169.07,708.0h2.80M169.22,700.6h2.80M169.38,704.4h2.80M169.54,694.7h2.80M169.70,701.9h2.80M169.86,714.7h2.80M170.02,711.1h2.80M170.17,714.8h2.80M170.33,713.6h2.80M170.49,711.3h2.80M170.65,711.0h2.80M170.81,714.8h2.80M170.97,715.5h2.80M171.12,708.2h2.80M171.28,712.2h2.80M171.44,719.0h2.80M171.60,714.0h2.80M171.76,725.8h2.80M171.92,715.7h2.80M172.08,721.4h2.80M172.23,731.1h2.80M172.39,733.8h2.80M172.55,721.5h2.80M172.71,715.6h2.80M172.87,708.6h2.80M173.03,707.7h2.80M173.18,705.1h2.80M173.34,713.7h2.80M173.50,709.1h2.80M173.66,716.4h2.80M173.82,719.2h2.80M173.98,719.1h2.80M174.13,721.7h2.80M174.29,723.5h2.80M174.45,722.9h2.80M174.61,726.9h2.80M174.77,716.8h2.80M174.93,730.8h2.80M175.08,731.7h2.80M175.24,730.7h2.80M175.40,725.5h2.80M175.56,745.7h2.80M175.72,712.1h2.80M175.88,717.8h2.80M176.04,718.5h2.80M176.19,716.3h2.80M176.35,726.2h2.80M176.51,721.9h2.80M176.67,715.9h2.80M176.83,708.4h2.80M176.99,703.5h2.80M177.14,699.0h2.80M177.30,707.7h2.80M177.46,710.7h2.80M177.62,716.5h2.80M177.78,733.9h2.80M177.94,711.4h2.80M178.09,713.5h2.80M178.25,709.6h2.80M178.41,711.7h2.80M178.57,707.9h2.80M178.73,707.5h2.80M178.89,712.0h2.80M179.04,718.4h2.80M179.20,721.8h2.80M179.36,726.6h2.80M179.52,733.9h2.80M179.68,715.3h2.80M179.84,710.5h2.80M180.00,711.1h2.80M180.15,705.8h2.80M180.31,702.0h2.80M180.47,708.1h2.80M180.63,708.5h2.80M180.79,696.3h2.80M180.95,703.0h2.80M181.10,708.3h2.80M181.26,712.8h2.80M181.42,714.5h2.80M181.58,713.1h2.80M181.74,715.0h2.80M181.90,707.5h2.80M182.05,708.2h2.80M182.21,703.9h2.80M182.37,715.1h2.80M182.53,718.5h2.80M182.69,718.0h2.80M182.85,720.8h2.80M183.00,718.9h2.80M183.16,719.9h2.80M183.32,718.1h2.80M183.48,709.7h2.80M72.66,696.9h3.00M72.82,693.2h3.00" stroke="#0072BD" stroke-width="3.2"/>
<path d="M184.9,720.8L866,720.8" stroke="#0072BD" stroke-width="3.2"/>
<path d="M74,689.3L108.8,689.3" stroke="#0072BD" stroke-width="3.2"/>
<path d="M74.5,227.5C77.5,229.1 87.0,234.4 92.5,237.2C98.0,240.0 101.2,241.1 107.4,244.2C113.6,247.3 122.0,252.0 129.9,255.9C137.8,259.8 147.5,264.3 155.0,267.5C162.5,270.7 168.3,272.8 175.0,275.0C181.7,277.2 188.2,279.2 194.9,281.0C201.6,282.8 206.6,283.4 214.9,285.5C223.2,287.6 237.5,291.8 244.8,293.6C252.1,295.5 251.3,295.1 258.8,296.6C266.3,298.1 279.0,300.6 290.0,302.5C301.0,304.4 313.3,306.2 324.9,307.7C336.5,309.1 348.1,310.1 359.8,311.2C371.5,312.3 383.1,313.1 394.8,314.1C406.5,315.1 417.9,316.2 429.8,317.0C441.7,317.8 454.2,318.3 466.4,318.7C478.6,319.1 495.7,319.5 503.0,319.6C510.3,319.7 508.8,319.5 510.0,319.5" fill="none" stroke="#EDB120" stroke-width="4.2" stroke-linejoin="round"/>
<path d="M503.0,319.6C504.2,319.6 507.9,319.7 510.0,319.5C512.1,319.3 513.9,318.9 515.5,318.2C517.1,317.5 518.4,316.8 519.5,315.2C520.6,313.6 521.3,311.9 522.2,308.3C523.1,304.7 524.2,297.9 525.0,293.7C525.8,289.5 525.9,289.2 526.7,283.3C527.5,277.4 528.9,267.3 530.0,258.3C531.1,249.3 532.5,234.3 533.3,229.2C534.1,224.1 534.5,227.8 534.8,227.5" fill="none" stroke="#EDB120" stroke-width="3" stroke-linejoin="round"/>
<path d="M534,227.8H866" fill="none" stroke="#EDB120" stroke-width="3"/>
<path d="M85.34,689.31L94.34,689.31M86.66,686.13L93.02,692.50M89.84,684.81L89.84,693.81M93.02,686.13L86.66,692.50M101.18,689.31L110.18,689.31M102.50,686.13L108.86,692.50M105.68,684.81L105.68,693.81M108.86,686.13L102.50,692.50M117.02,720.81L126.02,720.81M118.34,717.62L124.70,723.99M121.52,716.31L121.52,725.31M124.70,717.62L118.34,723.99M132.86,755.66L141.86,755.66M134.18,752.48L140.54,758.84M137.36,751.16L137.36,760.16M140.54,752.48L134.18,758.84M148.70,755.66L157.70,755.66M150.02,752.48L156.38,758.84M153.20,751.16L153.20,760.16M156.38,752.48L150.02,758.84M164.54,720.81L173.54,720.81M165.86,717.62L172.22,723.99M169.04,716.31L169.04,725.31M172.22,717.62L165.86,723.99M180.38,720.81L189.38,720.81M181.70,717.62L188.06,723.99M184.88,716.31L184.88,725.31M188.06,717.62L181.70,723.99M196.22,720.81L205.22,720.81M197.54,717.62L203.90,723.99M200.72,716.31L200.72,725.31M203.90,717.62L197.54,723.99M212.06,720.81L221.06,720.81M213.38,717.62L219.74,723.99M216.56,716.31L216.56,725.31M219.74,717.62L213.38,723.99M227.90,720.81L236.90,720.81M229.22,717.62L235.58,723.99M232.40,716.31L232.40,725.31M235.58,717.62L229.22,723.99M243.74,720.81L252.74,720.81M245.06,717.62L251.42,723.99M248.24,716.31L248.24,725.31M251.42,717.62L245.06,723.99M259.58,720.81L268.58,720.81M260.90,717.62L267.26,723.99M264.08,716.31L264.08,725.31M267.26,717.62L260.90,723.99M275.42,720.81L284.42,720.81M276.74,717.62L283.10,723.99M279.92,716.31L279.92,725.31M283.10,717.62L276.74,723.99M291.26,720.81L300.26,720.81M292.58,717.62L298.94,723.99M295.76,716.31L295.76,725.31M298.94,717.62L292.58,723.99M307.10,720.81L316.10,720.81M308.42,717.62L314.78,723.99M311.60,716.31L311.60,725.31M314.78,717.62L308.42,723.99M322.94,720.81L331.94,720.81M324.26,717.62L330.62,723.99M327.44,716.31L327.44,725.31M330.62,717.62L324.26,723.99M338.78,720.81L347.78,720.81M340.10,717.62L346.46,723.99M343.28,716.31L343.28,725.31M346.46,717.62L340.10,723.99M354.62,720.81L363.62,720.81M355.94,717.62L362.30,723.99M359.12,716.31L359.12,725.31M362.30,717.62L355.94,723.99M370.46,720.81L379.46,720.81M371.78,717.62L378.14,723.99M374.96,716.31L374.96,725.31M378.14,717.62L371.78,723.99M386.30,720.81L395.30,720.81M387.62,717.62L393.98,723.99M390.80,716.31L390.80,725.31M393.98,717.62L387.62,723.99M402.14,720.81L411.14,720.81M403.46,717.62L409.82,723.99M406.64,716.31L406.64,725.31M409.82,717.62L403.46,723.99M417.98,720.81L426.98,720.81M419.30,717.62L425.66,723.99M422.48,716.31L422.48,725.31M425.66,717.62L419.30,723.99M433.82,720.81L442.82,720.81M435.14,717.62L441.50,723.99M438.32,716.31L438.32,725.31M441.50,717.62L435.14,723.99M449.66,720.81L458.66,720.81M450.98,717.62L457.34,723.99M454.16,716.31L454.16,725.31M457.34,717.62L450.98,723.99M465.50,720.81L474.50,720.81M466.82,717.62L473.18,723.99M470.00,716.31L470.00,725.31M473.18,717.62L466.82,723.99M481.34,720.81L490.34,720.81M482.66,717.62L489.02,723.99M485.84,716.31L485.84,725.31M489.02,717.62L482.66,723.99M497.18,720.81L506.18,720.81M498.50,717.62L504.86,723.99M501.68,716.31L501.68,725.31M504.86,717.62L498.50,723.99M513.02,720.81L522.02,720.81M514.34,717.62L520.70,723.99M517.52,716.31L517.52,725.31M520.70,717.62L514.34,723.99M528.86,720.81L537.86,720.81M530.18,717.62L536.54,723.99M533.36,716.31L533.36,725.31M536.54,717.62L530.18,723.99M544.70,720.81L553.70,720.81M546.02,717.62L552.38,723.99M549.20,716.31L549.20,725.31M552.38,717.62L546.02,723.99M560.54,720.81L569.54,720.81M561.86,717.62L568.22,723.99M565.04,716.31L565.04,725.31M568.22,717.62L561.86,723.99M576.38,720.81L585.38,720.81M577.70,717.62L584.06,723.99M580.88,716.31L580.88,725.31M584.06,717.62L577.70,723.99M592.22,720.81L601.22,720.81M593.54,717.62L599.90,723.99M596.72,716.31L596.72,725.31M599.90,717.62L593.54,723.99M608.06,720.81L617.06,720.81M609.38,717.62L615.74,723.99M612.56,716.31L612.56,725.31M615.74,717.62L609.38,723.99M623.90,720.81L632.90,720.81M625.22,717.62L631.58,723.99M628.40,716.31L628.40,725.31M631.58,717.62L625.22,723.99M639.74,720.81L648.74,720.81M641.06,717.62L647.42,723.99M644.24,716.31L644.24,725.31M647.42,717.62L641.06,723.99M655.58,720.81L664.58,720.81M656.90,717.62L663.26,723.99M660.08,716.31L660.08,725.31M663.26,717.62L656.90,723.99M671.42,720.81L680.42,720.81M672.74,717.62L679.10,723.99M675.92,716.31L675.92,725.31M679.10,717.62L672.74,723.99M687.26,720.81L696.26,720.81M688.58,717.62L694.94,723.99M691.76,716.31L691.76,725.31M694.94,717.62L688.58,723.99M703.10,720.81L712.10,720.81M704.42,717.62L710.78,723.99M707.60,716.31L707.60,725.31M710.78,717.62L704.42,723.99M718.94,720.81L727.94,720.81M720.26,717.62L726.62,723.99M723.44,716.31L723.44,725.31M726.62,717.62L720.26,723.99M734.78,720.81L743.78,720.81M736.10,717.62L742.46,723.99M739.28,716.31L739.28,725.31M742.46,717.62L736.10,723.99M750.62,720.81L759.62,720.81M751.94,717.62L758.30,723.99M755.12,716.31L755.12,725.31M758.30,717.62L751.94,723.99M766.46,720.81L775.46,720.81M767.78,717.62L774.14,723.99M770.96,716.31L770.96,725.31M774.14,717.62L767.78,723.99M782.30,720.81L791.30,720.81M783.62,717.62L789.98,723.99M786.80,716.31L786.80,725.31M789.98,717.62L783.62,723.99M798.14,720.81L807.14,720.81M799.46,717.62L805.82,723.99M802.64,716.31L802.64,725.31M805.82,717.62L799.46,723.99M813.98,720.81L822.98,720.81M815.30,717.62L821.66,723.99M818.48,716.31L818.48,725.31M821.66,717.62L815.30,723.99M829.82,720.81L838.82,720.81M831.14,717.62L837.50,723.99M834.32,716.31L834.32,725.31M837.50,717.62L831.14,723.99M845.66,720.81L854.66,720.81M846.98,717.62L853.34,723.99M850.16,716.31L850.16,725.31M853.34,717.62L846.98,723.99M861.50,720.81L870.50,720.81M862.82,717.62L869.18,723.99M866.00,716.31L866.00,725.31M869.18,717.62L862.82,723.99" stroke="#D4008C" stroke-width="1.35"/>
<path d="M74.5,120 V761.5 H866.5" fill="none" stroke="#262626" stroke-width="1.3"/>
<path d="M74,120.5H81M74,227.5H81M74,334.5H81M74,440.5H81M74,547.5H81M74,654.5H81M74,761.5H81M74.5,761V754M153.5,761V754M232.5,761V754M312.5,761V754M391.5,761V754M470.5,761V754M549.5,761V754M628.5,761V754M708.5,761V754M787.5,761V754M866.5,761V754" stroke="#262626" stroke-width="1.3"/>
  </svg>
  <div class="yt" style="top:114px">1000</div><div class="a" style="left:65px;top:221px;width:4px;overflow:hidden;font-size:12px;color:#1e1e1e"><span style="position:relative;left:-3px">0</span></div><div class="yt" style="top:328px">-1000</div><div class="yt" style="top:434px">-2000</div><div class="yt" style="top:541px">-3000</div><div class="yt" style="top:648px">-4000</div><div class="yt" style="top:755px">-5000</div>
  <div class="xt" style="left:44px">0</div><div class="xt" style="left:123px">500</div><div class="xt" style="left:202px">1000</div><div class="xt" style="left:282px">1500</div><div class="xt" style="left:361px">2000</div><div class="xt" style="left:440px">2500</div><div class="xt" style="left:519px">3000</div><div class="xt" style="left:598px">3500</div><div class="xt" style="left:678px">4000</div><div class="xt" style="left:757px">4500</div><div class="xt" style="left:836px">5000</div>
  <div class="lbl" style="left:225px;top:103px;font-weight:bold;font-size:13px;letter-spacing:0.15px">Episode reward for SimplePendlumWithImageDiscreteAction with rlSACAgent</div>
  <div class="lbl" style="left:423px;top:782px;font-size:12px;letter-spacing:0.2px">Episode Number</div>
  <div class="lbl" style="left:-31px;transform:rotate(-90deg);font-size:12px;width:120px;text-align:center;letter-spacing:0.4px;top:433.5px">Episode Reward</div>

  <!-- right pane -->
  <div class="pane" style="left:901px;top:82px;width:301px;height:734px"></div>
  <div class="vdiv"></div>
  <div class="a" style="left:911px;top:97px;width:160px;height:15px;background:#2589dc"></div>
  <div class="a" style="left:1081px;top:92px;width:110px;height:25px;border:1px solid #c9c9c9;border-radius:4px;color:#a3a3a3;text-align:center;line-height:23px;letter-spacing:0.3px">Training stopped</div>
  <div class="lbl" style="left:911px;top:128px">Episode number:</div>
  <div class="lbl" style="left:1041px;top:128px">5000/5000</div>
  <div class="lbl" style="left:911px;top:153px">Start time:</div>
  <div class="lbl" style="left:1041px;top:153px">23-Nov-2024 18:56:55</div>
  <div class="lbl" style="left:911px;top:178px">Duration:</div>
  <div class="lbl" style="left:1041px;top:178px">24:23:51</div>
  <div class="lbl" style="left:911px;top:203px">Final result:</div>
  <div class="lbl" style="left:1041px;top:202px;line-height:15px">Training finished with<br>maximum number of<br>episodes.</div>

  <div class="grp" style="left:911px;top:258px;width:280px;height:295px">
    <div class="hd">Training Information</div>
  </div>
  <div class="a" style="left:922px;top:289px;width:258px;height:95px;border:1px solid #8c8c8c;background:#fff"></div>
  <div class="a" style="left:923px;top:290px;width:256px;height:27px;background:#f4f4f4;border-bottom:1px solid #8c8c8c"></div>
  <div class="a" style="left:923px;top:317px;width:256px;height:25px;background:#2589dc;border-bottom:1px solid #8c8c8c"></div>
  <div class="a" style="left:1051px;top:290px;width:1px;height:51px;background:#8c8c8c"></div>
  <div class="lbl" style="left:925px;top:298px;font-weight:bold;font-size:11.5px;letter-spacing:0">Agent</div>
  <div class="lbl" style="left:1054px;top:298px;font-weight:bold;font-size:11.5px;letter-spacing:0">Status</div>
  <div class="lbl" style="left:926px;top:320px;color:#fff;letter-spacing:-0.1px">rlSACAgent</div>
  <div class="lbl" style="left:1055px;top:320px;color:#fff">Training finished</div>
  <div class="lbl" style="left:921px;top:395px;font-weight:bold;font-size:11.5px;letter-spacing:0">Episode Information (rlSACAgent):</div>
  <div class="lbl" style="left:922px;top:420px">Episode reward:</div>
  <div class="lbl" style="left:1041px;top:420px">-4623.7581</div>
  <div class="lbl" style="left:922px;top:445px;letter-spacing:0.05px">Average reward:</div>
  <div class="lbl" style="left:1041px;top:445px">-4623.7581</div>
  <div class="lbl" style="left:922px;top:470px">Episode Q0:</div>
  <div class="lbl" style="left:1041px;top:470px">2.7081e-36</div>
  <div class="lbl" style="left:922px;top:495px;letter-spacing:0.12px">Evaluation statistic:</div>
  <div class="lbl" style="left:1041px;top:495px">-4623.7581</div>
  <div class="a" style="left:1070px;top:519px;width:110px;height:23px;border:1px solid #7a7a7a;border-radius:4px;text-align:center;line-height:21px;color:#1e1e1e;letter-spacing:0.25px">More Details...</div>

  <div class="grp" style="left:911px;top:563px;width:280px;height:118px">
    <div class="hd">Plot Options</div>
  </div>
  <div class="cb" style="left:922px;top:595px"></div>
  <svg class="a" style="left:922px;top:595px" width="14" height="14"><path d="M2,5.5L6.2,10.8L12,2.2" fill="none" stroke="#1e1e1e" stroke-width="2.1"/></svg>
  <div class="lbl" style="left:939px;top:595px">Show EpisodeQ0</div>
  <div class="cb" style="left:922px;top:622px"></div>
  <svg class="a" style="left:922px;top:622px" width="14" height="14"><path d="M2,5.5L6.2,10.8L12,2.2" fill="none" stroke="#1e1e1e" stroke-width="2.1"/></svg>
  <div class="lbl" style="left:939px;top:622px">Show evaluation statistic</div>
  <div class="cb" style="left:922px;top:652px"></div>
  <div class="lbl" style="left:939px;top:651px">Show last N episodes</div>
  <div class="a" style="left:1072px;top:647px;width:108px;height:23px;border:1px solid #d4d4d4;background:#f0f0f0;color:#a8a8a8;text-align:right;padding-right:5px;line-height:21px">5000</div>

  <div class="grp" style="left:911px;top:691px;width:280px;height:102px"></div>
  <div class="a" style="left:917px;top:697px;width:269px;height:90px;background:#fff"></div>
  <svg class="a" style="left:900px;top:680px" width="300" height="120">
    <path d="M73,23.5H113" stroke="#4DBEEE" stroke-width="1.5"/><circle cx="93" cy="23.5" r="1.6" fill="#4DBEEE"/>
    <path d="M73,43.5H113" stroke="#0072BD" stroke-width="1.5"/><circle cx="93" cy="43.5" r="1.6" fill="#0072BD"/>
    <path d="M73,62.5H113" stroke="#EDB120" stroke-width="1.5"/><circle cx="93" cy="62.5" r="1.6" fill="#EDB120"/>
    <path d="M88,90H98M93,85V95M89.5,86.5L96.5,93.5M96.5,86.5L89.5,93.5" stroke="#D4008C" stroke-width="0.95"/>
  </svg>
  <div class="lbl" style="left:1016px;top:699px;font-size:11px;letter-spacing:0.05px">Episode reward</div>
  <div class="lbl" style="left:1016px;top:718px;font-size:11px;letter-spacing:0.3px">Average reward</div>
  <div class="lbl" style="left:1016px;top:737px;font-size:11px;letter-spacing:-0.2px">Episode Q0</div>
  <div class="lbl" style="left:1016px;top:758px;line-height:14px;font-size:11px;letter-spacing:-0.05px">Evaluation statistic<br>(MeanEpisodeReward)</div>

  <!-- status bar -->
  
  <svg class="a" style="left:1185px;top:821px" width="12" height="14"><path d="M1,1L8,7L1,13Z" fill="#8f8f8f"/><rect x="8" y="1" width="2" height="12" fill="#8c8c8c"/></svg>
</div>
<div id="frame"></div>
</body></html>
